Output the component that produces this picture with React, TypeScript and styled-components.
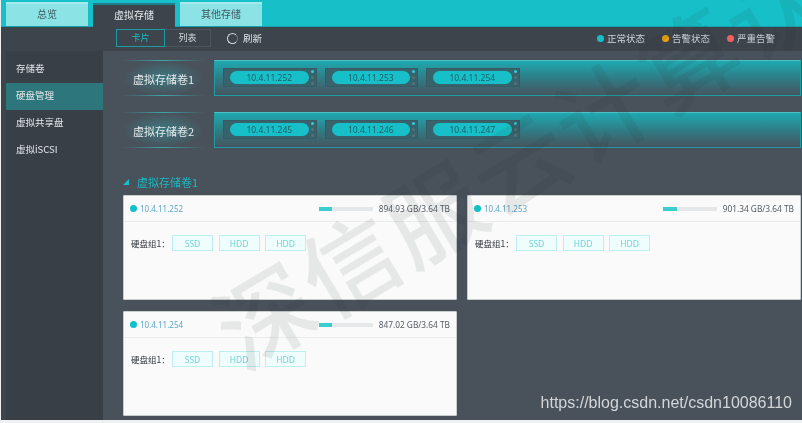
import styled, { createGlobalStyle } from "styled-components"

const GlobalStyle = createGlobalStyle`
  html, body {
    margin: 0;
    padding: 0;
    background: #f0f1f2;
  }
  * {
    box-sizing: border-box;
  }
`

const Page = styled.div`
  position: relative;
  width: 802px;
  height: 423px;
  padding: 0 0 3px 1px;
  overflow: hidden;
  background: #eef0f1;
  font-family: "Noto Sans CJK SC", "Noto Sans", sans-serif;
  font-size: 9.5px;
  color: #dfe3e6;
  filter: blur(0.45px);
`

const Frame = styled.div`
  display: flex;
  flex-direction: column;
  height: 100%;
  background: #49525b;
`

const TabBar = styled.div`
  display: flex;
  align-items: flex-end;
  gap: 5px;
  height: 27px;
  padding: 2px 0 0 5px;
  background: #17c0c9;
  border-bottom: 1px solid #14a3ac;
`

const Tab = styled.div<{ $active?: boolean }>`
  width: 82px;
  height: 24px;
  margin-bottom: ${(p) => (p.$active ? -1 : 0)}px;
  padding-bottom: 3px;
  display: flex;
  align-items: center;
  justify-content: center;
  background: ${(p) => (p.$active ? "#3d444c" : "#8be3e6")};
  color: ${(p) => (p.$active ? "#e6e9eb" : "#3f5a60")};
  border-top: 2px solid ${(p) => (p.$active ? "#1f7f88" : "#a5eaec")};
  font-size: 10px;
`

const Toolbar = styled.div`
  display: flex;
  align-items: center;
  height: 24px;
  padding: 0 27px 2px 115px;
  background: #3d444c;
`

const Segment = styled.div`
  display: flex;
  height: 18px;
`

const SegmentItem = styled.div<{ $active?: boolean }>`
  width: ${(p) => (p.$active ? 49 : 46)}px;
  padding-bottom: 1px;
  display: flex;
  align-items: center;
  justify-content: center;
  font-size: 9px;
  color: ${(p) => (p.$active ? "#17c0c9" : "#d5d9dc")};
  border: 1px solid ${(p) => (p.$active ? "#1d9aa2" : "#4d555d")};
  border-left-width: ${(p) => (p.$active ? 1 : 0)}px;
`

const Refresh = styled.div`
  display: flex;
  align-items: center;
  gap: 5px;
  margin-left: 16px;
`

const RefreshRing = styled.span`
  width: 11px;
  height: 11px;
  border-radius: 50%;
  border: 1.5px solid #d5d9dc;
  border-right-color: #6d747b;
`

const Legend = styled.div`
  display: flex;
  gap: 17px;
  margin-left: auto;
`

const LegendItem = styled.div`
  display: flex;
  align-items: center;
  gap: 3px;
  color: #cfd4d8;
`

const Dot = styled.span<{ $color: string }>`
  flex: none;
  width: 7px;
  height: 7px;
  border-radius: 50%;
  background: ${(p) => p.$color};
`

const Body = styled.div`
  flex: 1;
  display: flex;
  min-height: 0;
`

const Sidebar = styled.div`
  flex: none;
  width: 102px;
  padding: 5px 0 0 5px;
  background: linear-gradient(90deg, #3d444c 5px, #383f47 5px);
`

const SideItem = styled.div<{ $active?: boolean }>`
  height: 27px;
  padding: 0 0 3px 10px;
  display: flex;
  align-items: center;
  font-size: 9.5px;
  color: #e4e7e9;
  background: ${(p) => (p.$active ? "#2d767c" : "transparent")};
`

const Content = styled.div`
  flex: 1;
  padding: 9px 0 0 19px;
  min-width: 0;
`

const VolumeRow = styled.div`
  display: flex;
  gap: 9px;
  height: 36px;
  margin-bottom: 16px;
`

const VolumeLabel = styled.div`
  position: relative;
  flex: none;
  width: 83px;
  padding-top: 1px;
  display: flex;
  align-items: center;
  justify-content: center;
  font-size: 11px;
  color: #e8ebed;
  background: radial-gradient(ellipse at center, #3d7a82 0%, rgba(73, 82, 91, 0) 68%);

  &::before,
  &::after {
    content: "";
    position: absolute;
    left: 0;
    right: 0;
    height: 1px;
    background: linear-gradient(90deg, transparent, #3fa4aa, transparent);
  }
  &::before {
    top: 0;
  }
  &::after {
    bottom: 0;
  }
`

const VolumePanel = styled.div`
  flex: 1;
  display: flex;
  align-items: center;
  gap: 8px;
  padding: 0 0 1px 8px;
  margin-right: 1px;
  border: 1px solid #1f9ea6;
  border-top-color: #4fc0c6;
  background: linear-gradient(180deg, #1fa9b1 0%, #2f7d86 50%, #46555f 100%);
`

const Server = styled.div`
  display: flex;
  align-items: center;
  width: 93.5px;
  height: 19px;
  padding: 0 2px 0 6px;
  background: #37636c;
  border: 1px solid #3a5a63;
`

const ServerPill = styled.div`
  flex: 1;
  height: 13px;
  display: flex;
  align-items: center;
  justify-content: center;
  border-radius: 7px;
  background: #17c0c9;
  font-family: "Noto Sans", sans-serif;
  font-size: 8.5px;
  color: #1f5d66;
`

const ServerLeds = styled.div`
  display: flex;
  flex-direction: column;
  gap: 3px;
  margin-left: 2px;
`

const Led = styled.span<{ $on?: boolean }>`
  width: 3px;
  height: 3px;
  border-radius: 50%;
  background: ${(p) => (p.$on ? "#2ad0d8" : "#5a7078")};
`

const SectionTitle = styled.div`
  display: flex;
  align-items: center;
  gap: 8px;
  height: 16px;
  margin: 26px 0 5px 1px;
  padding-bottom: 1px;
  font-size: 11px;
  color: #19b9c2;
`

const Triangle = styled.span`
  width: 0;
  height: 0;
  border-style: solid;
  border-width: 0 0 6px 6px;
  border-color: transparent transparent #19c0c9 transparent;
`

const CardGrid = styled.div`
  display: grid;
  grid-template-columns: 334px 334px;
  grid-auto-rows: 105px;
  gap: 11px 10px;
  margin-left: 1px;
`

const Card = styled.div`
  background: #fafafa;
  border: 1px solid #c9ced1;
  border-radius: 1px;
`

const CardHead = styled.div`
  display: flex;
  align-items: center;
  height: 26px;
  padding: 0 6px;
  border-bottom: 1px solid #e9ebec;
`

const CardIp = styled.span`
  margin-left: 3px;
  font-family: "Noto Sans", sans-serif;
  font-size: 8px;
  color: #5da6c9;
`

const Usage = styled.div`
  display: flex;
  align-items: center;
  gap: 6px;
  margin-left: auto;
  font-family: "Noto Sans", sans-serif;
  font-size: 8.3px;
  color: #555c62;
`

const UsageTrack = styled.div`
  width: 54px;
  height: 4px;
  background: #e6e7e8;
`

const UsageFill = styled.div`
  height: 100%;
  background: #3ccdd0;
`

const DiskGroup = styled.div`
  display: flex;
  align-items: center;
  padding: 13px 0 0 7px;
  color: #33383d;
  font-size: 8.5px;
`

const DiskLabel = styled.span`
  width: 41px;
`

const DiskList = styled.div`
  display: flex;
  gap: 5.5px;
`

const Disk = styled.div`
  width: 41px;
  height: 16px;
  display: flex;
  align-items: center;
  justify-content: center;
  font-family: "Noto Sans", sans-serif;
  font-size: 8.5px;
  color: #6fd3d8;
  background: #f0fdfd;
  border: 1px solid #bdeef0;
`

const Watermark = styled.div`
  position: absolute;
  left: 246px;
  top: 282px;
  font-size: 96px;
  font-weight: 500;
  letter-spacing: 3px;
  line-height: 1;
  white-space: nowrap;
  color: rgba(30, 40, 48, 0.09);
  transform: rotate(-31deg);
  transform-origin: 0 100%;
  pointer-events: none;
`

const SiteMark = styled.div`
  position: absolute;
  right: 10px;
  bottom: 11px;
  font-family: "Liberation Sans", sans-serif;
  font-size: 16px;
  color: #d3d6d8;
`

const volumes = [
  { name: "虚拟存储卷1", ips: ["10.4.11.252", "10.4.11.253", "10.4.11.254"] },
  { name: "虚拟存储卷2", ips: ["10.4.11.245", "10.4.11.246", "10.4.11.247"] },
]

const cards = [
  { ip: "10.4.11.252", used: "894.93 GB/3.64 TB", pct: 25 },
  { ip: "10.4.11.253", used: "901.34 GB/3.64 TB", pct: 26 },
  { ip: "10.4.11.254", used: "847.02 GB/3.64 TB", pct: 24 },
]

export default function App() {
  return (
    <Page>
      <GlobalStyle />
      <Frame>
        <TabBar>
          <Tab>总览</Tab>
          <Tab $active>虚拟存储</Tab>
          <Tab>其他存储</Tab>
        </TabBar>
        <Toolbar>
          <Segment>
            <SegmentItem $active>卡片</SegmentItem>
            <SegmentItem>列表</SegmentItem>
          </Segment>
          <Refresh>
            <RefreshRing />
            刷新
          </Refresh>
          <Legend>
            <LegendItem>
              <Dot $color="#17c0c9" />
              正常状态
            </LegendItem>
            <LegendItem>
              <Dot $color="#eda30f" />
              告警状态
            </LegendItem>
            <LegendItem>
              <Dot $color="#f0605f" />
              严重告警
            </LegendItem>
          </Legend>
        </Toolbar>
        <Body>
          <Sidebar>
            <SideItem>存储卷</SideItem>
            <SideItem $active>硬盘管理</SideItem>
            <SideItem>虚拟共享盘</SideItem>
            <SideItem>虚拟iSCSI</SideItem>
          </Sidebar>
          <Content>
            {volumes.map((v) => (
              <VolumeRow key={v.name}>
                <VolumeLabel>{v.name}</VolumeLabel>
                <VolumePanel>
                  {v.ips.map((ip) => (
                    <Server key={ip}>
                      <ServerPill>{ip}</ServerPill>
                      <ServerLeds>
                        <Led $on />
                        <Led />
                        <Led />
                      </ServerLeds>
                    </Server>
                  ))}
                </VolumePanel>
              </VolumeRow>
            ))}
            <SectionTitle>
              <Triangle />
              虚拟存储卷1
            </SectionTitle>
            <CardGrid>
              {cards.map((c) => (
                <Card key={c.ip}>
                  <CardHead>
                    <Dot $color="#12c0c9" />
                    <CardIp>{c.ip}</CardIp>
                    <Usage>
                      <UsageTrack>
                        <UsageFill style={{ width: `${c.pct}%` }} />
                      </UsageTrack>
                      {c.used}
                    </Usage>
                  </CardHead>
                  <DiskGroup>
                    <DiskLabel>硬盘组1：</DiskLabel>
                    <DiskList>
                      <Disk>SSD</Disk>
                      <Disk>HDD</Disk>
                      <Disk>HDD</Disk>
                    </DiskList>
                  </DiskGroup>
                </Card>
              ))}
            </CardGrid>
          </Content>
        </Body>
      </Frame>
      <Watermark>深信服云计算认</Watermark>
      <SiteMark>https://blog.csdn.net/csdn10086110</SiteMark>
    </Page>
  )
}
